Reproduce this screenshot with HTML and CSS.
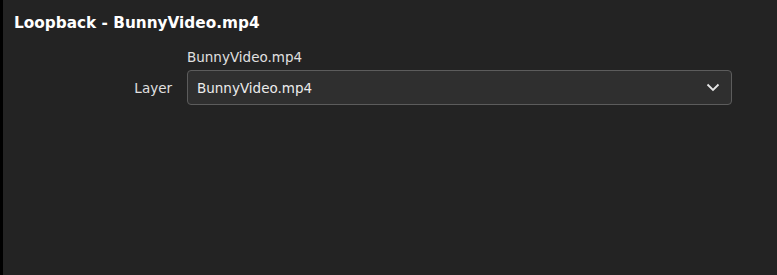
FILE: index.html
```html
<!DOCTYPE html>
<html lang="en">

<head>
    <meta charset="UTF-8">
    <meta name="viewport" content="width=device-width, initial-scale=1.0">
    <title>Loopback</title>
    <link rel="stylesheet" href="styles.css">
</head>

<body>
    <section class="panel">
        <h1 class="panel-title">Loopback - BunnyVideo.mp4</h1>

        <div class="form">
            <div class="form-row">
                <span class="form-label"></span>
                <div class="form-value">BunnyVideo.mp4</div>
            </div>
            <div class="form-row">
                <label class="form-label" for="layer">Layer</label>
                <div class="select" id="layer">
                    <span class="select-text">BunnyVideo.mp4</span>
                    <svg class="select-icon" width="14" height="9" viewBox="0 0 14 9">
                        <path d="M1.5 1.5 L7 7 L12.5 1.5" fill="none" stroke="#e6e6e6" stroke-width="1.8" />
                    </svg>
                </div>
            </div>
        </div>
    </section>
</body>

</html>
```
FILE: styles.css
```css
* {
    margin: 0;
    padding: 0;
    box-sizing: border-box;
}

html,
body {
    height: 100%;
}

body {
    font-family: 'DejaVu Sans', 'Open Sans', sans-serif;
    background-color: #232323;
    color: #e8e8e8;
}

.panel {
    height: 100%;
    border-left: 3px solid #000000;
    padding: 13px 0 0 11px;
}

.panel-title {
    font-size: 15.3px;
    font-weight: 700;
    color: #ffffff;
    line-height: 20px;
}

.form {
    margin-top: 15px;
    display: flex;
    flex-direction: column;
    gap: 4px;
    padding-right: 45px;
}

.form-row {
    display: flex;
    align-items: center;
    gap: 15px;
}

.form-label {
    width: 158px;
    flex-shrink: 0;
    text-align: right;
    font-size: 13.5px;
    color: #e0e0e0;
}

.form-value {
    font-size: 13.5px;
    line-height: 18px;
    color: #e0e0e0;
}

.select {
    flex: 1;
    height: 35px;
    display: flex;
    align-items: center;
    justify-content: space-between;
    padding: 0 11px 0 9px;
    background-color: #2f2f2f;
    border: 1px solid #5c5c5c;
    border-radius: 4px;
    font-size: 13.5px;
    color: #ececec;
}
```
